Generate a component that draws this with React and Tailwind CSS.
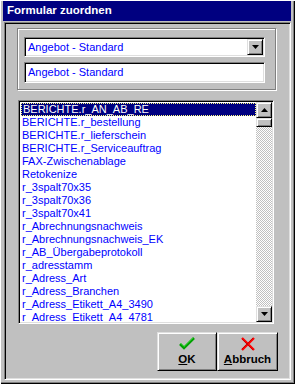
const items = [
  "BERICHTE.r_AN_AB_RE",
  "BERICHTE.r_bestellung",
  "BERICHTE.r_lieferschein",
  "BERICHTE.r_Serviceauftrag",
  "FAX-Zwischenablage",
  "Retokenize",
  "r_3spalt70x35",
  "r_3spalt70x36",
  "r_3spalt70x41",
  "r_Abrechnungsnachweis",
  "r_Abrechnungsnachweis_EK",
  "r_AB_Übergabeprotokoll",
  "r_adresstamm",
  "r_Adress_Art",
  "r_Adress_Branchen",
  "r_Adress_Etikett_A4_3490",
  "r_Adress_Etikett_A4_4781",
  "r_Adress_Etikett_A4_4782",
];

const sunken =
  "border border-t-[#808080] border-l-[#808080] border-r-white border-b-white shadow-[inset_1px_1px_0_#000,inset_-1px_-1px_0_#dfdfdf]";
const raised =
  "border border-t-[#dfdfdf] border-l-[#dfdfdf] border-r-black border-b-black shadow-[inset_1px_1px_0_#fff,inset_-1px_-1px_0_#808080]";

const Arrow = ({ up }) => (
  <svg width="7" height="4" viewBox="0 0 7 4">
    {up ? (
      <path d="M3.5 0 L7 4 L0 4 Z" fill="#000" />
    ) : (
      <path d="M0 0 L7 0 L3.5 4 Z" fill="#000" />
    )}
  </svg>
);

const Check = () => (
  <svg width="16" height="14" viewBox="0 0 16 14">
    <path d="M1 7 L5 11 L15 1" fill="none" stroke="#00a000" strokeWidth="2.6" />
    <path d="M1.5 6 L5 9.5 L14 0.8" fill="none" stroke="#40e040" strokeWidth="0.9" />
  </svg>
);

const Cross = () => (
  <svg width="14" height="14" viewBox="0 0 14 14">
    <path d="M1 1 L13 13 M13 1 L1 13" fill="none" stroke="#ff0000" strokeWidth="2.4" />
    <path d="M1 2 L12 13 M12 1 L1 12" fill="none" stroke="#a00000" strokeWidth="0.6" />
  </svg>
);

export default function App() {
  return (
    <div
      className="w-[295px] h-[384px] bg-[#c0c0c0] border-t border-l border-white shadow-[inset_-1px_-1px_0_#000,inset_-2px_-2px_0_#808080] overflow-hidden"
      style={{ fontFamily: '"Liberation Sans", Arial, sans-serif' }}
    >
      {/* Title bar */}
      <div className="ml-[2px] w-[288px] h-[20px] bg-[#000080] flex items-center pl-[4px]">
        <span className="text-white font-bold text-[11.5px] leading-none">Formular zuordnen</span>
      </div>

      {/* Sunken client panel */}
      <div className={`mt-[1px] ml-[3px] w-[287px] h-[358px] ${sunken} flex flex-col`}>
        {/* Group box */}
        <div className="mt-[5px] ml-[12px] w-[259px] h-[62px] border border-[#808080] shadow-[inset_1px_1px_0_#fff,1px_1px_0_#fff] flex flex-col pt-[8px] pl-[6px] gap-[5px]">
          <div className={`w-[241px] h-[20px] bg-white ${sunken} flex items-center`}>
            <span className="flex-1 pl-[3px] text-[11px] text-[#0000ff] leading-none">Angebot - Standard</span>
            <div className={`w-[16px] h-[16px] bg-[#c0c0c0] ${raised} flex items-center justify-center mr-[1px]`}>
              <Arrow />
            </div>
          </div>
          <div className={`w-[241px] h-[21px] bg-white ${sunken} flex items-center`}>
            <span className="pl-[3px] text-[11px] text-[#0000ff] leading-none">Angebot - Standard</span>
          </div>
        </div>

        {/* List box */}
        <div className={`mt-[10px] ml-[13px] w-[256px] h-[224px] bg-white ${sunken} flex p-[1px] pl-[1px]`}>
          <div className="flex-1 overflow-hidden pt-[1px] pl-[1px]">
            {items.map((it, i) => (
              <div
                key={it}
                className={`h-[13px] flex items-center pl-[1px] text-[11px] leading-none whitespace-nowrap ${
                  i === 0
                    ? "bg-[#000080] text-white border border-dotted border-[#ffff80]"
                    : "text-[#0000ff]"
                }`}
              >
                {it}
              </div>
            ))}
          </div>
          {/* Scrollbar */}
          <div className="w-[16px] flex flex-col">
            <div className={`h-[16px] bg-[#c0c0c0] ${raised} flex items-center justify-center`}>
              <Arrow up />
            </div>
            <div className={`h-[9px] bg-[#c0c0c0] ${raised}`} />
            <div className="flex-1 bg-[repeating-conic-gradient(#c0c0c0_0_25%,#fff_0_50%)] bg-[length:2px_2px]" />
            <div className={`h-[16px] bg-[#c0c0c0] ${raised} flex items-center justify-center`}>
              <Arrow />
            </div>
          </div>
        </div>

        {/* Buttons */}
        <div className="mt-[8px] ml-[152px] flex">
          <button className={`w-[60px] h-[39px] bg-[#c0c0c0] ${raised} flex flex-col items-center justify-center gap-[3px]`}>
            <Check />
            <span className="text-[11.5px] font-bold leading-none text-black">
              <span className="underline">O</span>K
            </span>
          </button>
          <button className={`w-[61px] h-[39px] bg-[#c0c0c0] ${raised} flex flex-col items-center justify-center gap-[3px]`}>
            <Cross />
            <span className="text-[11.5px] font-bold leading-none text-black">
              <span className="underline">A</span>bbruch
            </span>
          </button>
        </div>
      </div>
    </div>
  );
}
